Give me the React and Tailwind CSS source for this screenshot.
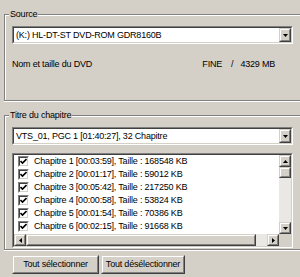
import React from "react";

function Arrow({ dir }) {
  const pts = {
    down: "0,0 5,0 2.5,3",
    up: "0,3 5,3 2.5,0",
    left: "3,0 3,5 0,2.5",
    right: "0,0 0,5 3,2.5",
  }[dir];
  const vb = dir === "down" || dir === "up" ? "0 0 5 3" : "0 0 3 5";
  const w = dir === "down" || dir === "up" ? 5 : 3;
  const h = dir === "down" || dir === "up" ? 3 : 5;
  return (
    <svg width={w} height={h} viewBox={vb}>
      <polygon points={pts} fill="#000" />
    </svg>
  );
}

function Raised({ className = "", children }) {
  return (
    <div className={`border border-t-[#d4d0c8] border-l-[#d4d0c8] border-b-[#404040] border-r-[#404040] ${className}`}>
      <div className="w-full h-full border border-t-white border-l-white border-b-[#808080] border-r-[#808080] bg-[#d4d0c8] flex items-center justify-center">
        {children}
      </div>
    </div>
  );
}

function Sunken({ className = "", innerClass = "", children }) {
  return (
    <div className={`border border-t-[#808080] border-l-[#808080] border-b-white border-r-white ${className}`}>
      <div className={`w-full h-full border border-t-[#404040] border-l-[#404040] border-b-[#d4d0c8] border-r-[#d4d0c8] bg-white ${innerClass}`}>
        {children}
      </div>
    </div>
  );
}

function Combo({ text }) {
  return (
    <Sunken className="w-[281px] h-[18px]" innerClass="flex items-center">
      <div className="flex-1 pl-[2px] whitespace-nowrap overflow-hidden leading-[12px]">{text}</div>
      <Raised className="w-[12px] h-[14px]">
        <Arrow dir="down" />
      </Raised>
    </Sunken>
  );
}

function Check() {
  return (
    <div className="w-[11px] h-[11px] border border-t-[#808080] border-l-[#808080] border-b-white border-r-white shrink-0">
      <div className="w-full h-full border border-t-[#404040] border-l-[#404040] border-b-[#d4d0c8] border-r-[#d4d0c8] bg-white flex items-center justify-center">
        <svg width="7" height="7" viewBox="0 0 7 7">
          <path d="M0.5 3 L2.5 5 L6.5 1" stroke="#000" strokeWidth="1.6" fill="none" />
        </svg>
      </div>
    </div>
  );
}

const chapters = [
  "Chapitre 1 [00:03:59], Taille : 168548 KB",
  "Chapitre 2 [00:01:17], Taille : 59012 KB",
  "Chapitre 3 [00:05:42], Taille : 217250 KB",
  "Chapitre 4 [00:00:58], Taille : 53824 KB",
  "Chapitre 5 [00:01:54], Taille : 70386 KB",
  "Chapitre 6 [00:02:15], Taille : 91668 KB",
];

function Group({ label, className = "", children }) {
  return (
    <div className={`relative w-[310px] border-t border-l border-b border-r-0 border-[#808080] shadow-[inset_1px_1px_0_#fff,0_1px_0_#fff] ${className}`}>
      <div className="absolute left-[4px] top-[-6px] px-[1px] bg-[#d4d0c8] leading-[11px]">{label}</div>
      {children}
    </div>
  );
}

export default function App() {
  return (
    <div className="w-[300px] h-[277px] overflow-hidden bg-[#d4d0c8] text-black font-['Liberation_Sans',Arial,sans-serif] text-[9px] tracking-[-0.2px] leading-none pt-[14px] pl-[4px]">
      <Group label="Source" className="h-[87px] pt-[11px] pl-[7px]">
        <Combo text="(K:) HL-DT-ST DVD-ROM GDR8160B" />
        <div className="w-[281px] h-[12px] mt-[14px] flex items-center whitespace-nowrap">
          <span>Nom et taille du DVD</span>
          <span className="ml-auto">FINE</span>
          <span className="ml-[9px]">/</span>
          <span className="ml-[7px] mr-[18px]">4329 MB</span>
        </div>
      </Group>

      <Group label="Titre du chapitre" className="h-[135px] mt-[14px] pt-[11px] pl-[7px]">
        <Combo text="VTS_01, PGC 1 [01:40:27], 32 Chapitre" />
        <Sunken className="w-[281px] h-[95px] mt-[8px]" innerClass="grid grid-cols-[1fr_12px] grid-rows-[1fr_12px]">
          <div className="overflow-hidden flex flex-col">
            {chapters.map((c) => (
              <div key={c} className="h-[13px] flex items-center pl-[4px] whitespace-nowrap">
                <Check />
                <span className="ml-[5px]">{c}</span>
              </div>
            ))}
          </div>
          <div className="flex flex-col bg-[#eae8e4]">
            <Raised className="w-[12px] h-[12px]">
              <Arrow dir="up" />
            </Raised>
            <Raised className="w-[12px] h-[11px]" />
            <div className="flex-1" />
            <Raised className="w-[12px] h-[12px]">
              <Arrow dir="down" />
            </Raised>
          </div>
          <div className="flex bg-[#eae8e4]">
            <Raised className="w-[12px] h-[12px]">
              <Arrow dir="left" />
            </Raised>
            <Raised className="w-[230px] h-[12px]" />
            <div className="flex-1" />
            <Raised className="w-[12px] h-[12px]">
              <Arrow dir="right" />
            </Raised>
          </div>
          <div className="bg-[#d4d0c8]" />
        </Sunken>
      </Group>

      <div className="flex gap-[2px] pl-[8px] mt-[5px]">
        <Raised className="w-[87px] h-[19px]">Tout sélectionner</Raised>
        <Raised className="w-[84px] h-[19px]">Tout désélectionner</Raised>
      </div>
    </div>
  );
}
